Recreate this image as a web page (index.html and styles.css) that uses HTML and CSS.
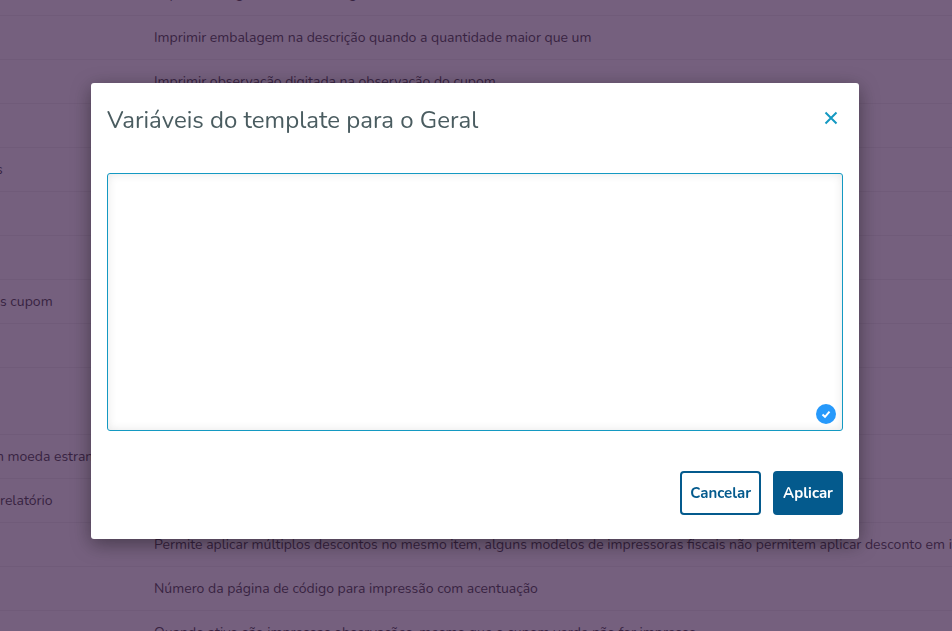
FILE: index.html
```html
<!DOCTYPE html>
<html lang="pt-BR">
<head>
<meta charset="UTF-8">
<meta name="viewport" content="width=device-width, initial-scale=1.0">
<title>Variáveis do template</title>
<link rel="stylesheet" href="styles.css">
</head>
<body>

<main class="page">
  <table class="params">
    <tbody>
      <tr><td></td><td>Imprimir código de barras no lugar do item</td></tr>
      <tr><td></td><td>Imprimir embalagem na descrição quando a quantidade maior que um</td></tr>
      <tr><td></td><td>Imprimir observação digitada na observação do cupom</td></tr>
      <tr><td></td><td></td></tr>
      <tr><td class="cut">s</td><td></td></tr>
      <tr><td></td><td></td></tr>
      <tr><td></td><td></td></tr>
      <tr><td>s cupom</td><td></td></tr>
      <tr><td></td><td></td></tr>
      <tr class="tall"><td></td><td></td></tr>
      <tr><td class="cut">n moeda estrangeira</td><td></td></tr>
      <tr><td>relatório</td><td></td></tr>
      <tr><td></td><td>Permite aplicar múltiplos descontos no mesmo item, alguns modelos de impressoras fiscais não permitem aplicar desconto em item</td></tr>
      <tr><td></td><td>Número da página de código para impressão com acentuação</td></tr>
      <tr><td></td><td>Quando ativo são impressas observações, mesmo que o cupom verde não for impresso</td></tr>
    </tbody>
  </table>
</main>

<div class="modal-bg">
  <form class="modal" role="dialog" aria-labelledby="modalTitle">
    <header class="modal-header">
      <h2 id="modalTitle">Variáveis do template para o Geral</h2>
      <button type="button" class="close" aria-label="Fechar">
        <svg width="14" height="14" viewBox="0 0 14 14"><path d="M1.5 1.5l11 11M12.5 1.5l-11 11" fill="none" stroke="currentColor" stroke-width="2"/></svg>
      </button>
    </header>
    <div class="editor">
      <textarea aria-labelledby="modalTitle"></textarea>
      <span class="badge">
        <svg width="20" height="20" viewBox="0 0 20 20"><path d="M6.5 10.5l2.5 2.3 4.5-5.2" fill="none" stroke="currentColor" stroke-width="2"/></svg>
      </span>
    </div>
    <footer class="modal-buttons">
      <button type="button" class="btn">Cancelar</button>
      <button type="submit" class="btn primary">Aplicar</button>
    </footer>
  </form>
</div>

</body>
</html>
```

FILE: styles.css
```css
:root {
  --text: #333;
  --title: #4a5c60;
  --accent: #1499c2;
  --primary: #045a8d;
  --check: #2699fb;
  --line: #ededed;
  --overlay: rgba(58,28,71,.7);
}
*{box-sizing:border-box;}
body{margin:0;font-family:Nunito,"Noto Sans",sans-serif;font-size:14px;color:var(--text);background:#fff;}
.page{height:100vh;overflow:hidden;}

/* Tabela de fundo, rolada */
.params{width:100%;margin-top:-28px;border-collapse:separate;border-spacing:0;table-layout:fixed;}
.params td{height:44px;padding:0;border-bottom:1px solid var(--line);white-space:nowrap;line-height:20px;}
.params td:first-child{width:154px;}
.params .tall td{height:67px;}
.params .cut{text-indent:-4px;}

/* Modal */
.modal-bg{position:fixed;top:0;left:0;width:100%;height:100%;padding:0 2px 9px 0;background:var(--overlay);display:flex;align-items:center;justify-content:center;}
.modal{width:768px;max-width:94%;padding:16px 16px 24px;background:#fff;border-radius:3px;box-shadow:0 5px 20px rgba(0,0,0,.4);}
.modal-header{display:flex;justify-content:space-between;align-items:flex-start;height:74px;}
.modal-header h2{margin:0;font-size:24px;line-height:42px;font-weight:400;color:var(--title);}
.close{display:flex;margin:12px 5px 0 0;padding:0;border:0;background:none;color:var(--accent);cursor:pointer;}
.editor{position:relative;}
.editor textarea{display:block;width:100%;height:258px;padding:8px;border:1px solid var(--accent);border-radius:3px;box-shadow:inset 0 0 10px rgba(0,0,0,.1);resize:none;outline:none;font:inherit;}
.badge{position:absolute;right:7px;bottom:7px;width:20px;height:20px;border-radius:50%;background:var(--check);color:#fff;}
.badge svg{display:block;}
.modal-buttons{display:flex;justify-content:flex-end;gap:12px;margin-top:40px;}
.btn{height:44px;padding:0 8px;border:2px solid var(--primary);border-radius:4px;background:#fff;color:var(--primary);font:700 15px Nunito,"Noto Sans",sans-serif;cursor:pointer;}
.btn.primary{background:var(--primary);color:#fff;}
```
